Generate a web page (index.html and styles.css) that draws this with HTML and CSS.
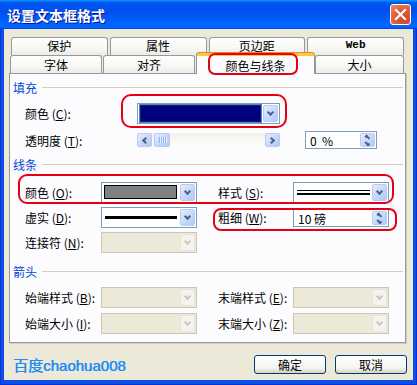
FILE: index.html
```html
<!DOCTYPE html>
<html lang="zh">
<head>
    <meta charset="UTF-8">
    <title>设置文本框格式</title>
    <link rel="stylesheet" href="styles.css">
</head>
<body>
    <div class="window">
        <div class="titlebar">
            <span class="title">设置文本框格式</span>
            <span class="close">
                <svg width="13" height="13" viewBox="0 0 13 13"><path d="M2 2L11 11M11 2L2 11" stroke="#fff" stroke-width="2.2" stroke-linecap="square"/></svg>
            </span>
        </div>
        <div class="client">
            <div class="tabs">
                <div class="tab-row back">
                    <div class="tab">保护</div>
                    <div class="tab">属性</div>
                    <div class="tab">页边距</div>
                    <div class="tab web">Web</div>
                </div>
                <div class="tab-row front">
                    <div class="tab t-font">字体</div>
                    <div class="tab t-align">对齐</div>
                    <div class="tab t-color active">颜色与线条</div>
                    <div class="tab t-size">大小</div>
                </div>
            </div>
            <div class="panel">
                <div class="group-title">填充</div>
                <div class="fill-row">
                    <span class="label">颜色 (<u>C</u>):</span>
                    <div class="combo fill-combo">
                        <div class="value"><span class="swatch navy"></span></div>
                        <span class="drop"></span>
                    </div>
                </div>
                <div class="fill-row second">
                    <span class="label">透明度 (<u>T</u>):</span>
                    <div class="hscroll">
                        <span class="sb-btn left"></span>
                        <span class="sb-thumb"><i></i><i></i><i></i><i></i></span>
                        <span class="sb-track"></span>
                        <span class="sb-btn right"></span>
                    </div>
                    <div class="spin pct"><span class="text">0&nbsp;&nbsp;%</span><span class="spin-btn"></span></div>
                </div>

                <div class="group-title">线条</div>
                <div class="form-grid">
                    <span class="label">颜色 (<u>O</u>):</span>
                    <div class="combo"><div class="value"><span class="swatch gray"></span></div><span class="drop"></span></div>
                    <span class="label right">样式 (<u>S</u>):</span>
                    <div class="combo"><div class="value"><span class="line-double"></span></div><span class="drop"></span></div>

                    <span class="label">虚实 (<u>D</u>):</span>
                    <div class="combo"><div class="value"><span class="line-solid"></span></div><span class="drop"></span></div>
                    <span class="label right">粗细 (<u>W</u>):</span>
                    <div class="spin weight"><span class="text">10 磅</span><span class="spin-btn"></span></div>

                    <span class="label">连接符 (<u>N</u>):</span>
                    <div class="combo disabled"><div class="value"></div><span class="drop"></span></div>
                </div>

                <div class="group-title">箭头</div>
                <div class="form-grid arrows">
                    <span class="label">始端样式 (<u>B</u>):</span>
                    <div class="combo disabled"><div class="value"></div><span class="drop"></span></div>
                    <span class="label right">末端样式 (<u>E</u>):</span>
                    <div class="combo disabled"><div class="value"></div><span class="drop"></span></div>

                    <span class="label">始端大小 (<u>I</u>):</span>
                    <div class="combo disabled"><div class="value"></div><span class="drop"></span></div>
                    <span class="label right">末端大小 (<u>Z</u>):</span>
                    <div class="combo disabled"><div class="value"></div><span class="drop"></span></div>
                </div>
            </div>
            <div class="footer">
                <span class="brand">百度chaohua008</span>
                <button class="btn">确定</button>
                <button class="btn">取消</button>
            </div>
        </div>

        <!-- red hand-drawn marks over the dialog -->
        <div class="mark mark-tab"></div>
        <div class="mark mark-fill"></div>
        <div class="mark mark-line"></div>
        <div class="mark mark-weight"></div>
    </div>
</body>
</html>
```

FILE: styles.css
```css
body {
    margin: 0;
    font-family: "Noto Sans CJK SC", "Noto Sans", sans-serif;
    font-size: 12px;
    color: #000;
    background: #fff;
}
.window {
    position: relative;
    width: 417px;
    height: 385px;
    display: flex;
    flex-direction: column;
    background: #0A4EE2;
    box-shadow: inset 1px 0 0 #0831D9, inset -1px 0 0 #0831D9, inset 0 -1px 0 #0831D9;
}
.titlebar {
    height: 29px;
    flex: none;
    display: flex;
    align-items: center;
    justify-content: space-between;
    padding: 0 6px 0 7px;
    background: linear-gradient(180deg, #0997FF 0, #0053EE 10%, #0050EE 40%, #0066FF 86%, #0066FF 93%, #005BFF 96%, #003DD7 100%);
}
.title {
    color: #fff;
    font-size: 14px;
    font-weight: bold;
    text-shadow: 1px 1px 0 #0F1089;
}
.close {
    width: 19px;
    height: 19px;
    display: flex;
    align-items: center;
    justify-content: center;
    border: 1px solid #fff;
    border-radius: 3px;
    background: radial-gradient(circle at 70% 75%, #CC4627 0, #E0603D 55%, #F08B6E 100%);
    margin-top: -1px;
}
.client {
    flex: 1;
    margin: 0 4px 5px;
    background: #ECE9D8;
}

/* tabs */
.tabs {
    margin-left: 5px;
    width: 397px;
    padding-top: 8px;
}
.tab-row {
    display: flex;
    height: 18px;
}
.back {
    padding: 0 2px;
    gap: 2px;
}
.back .tab {
    flex: 1;
    padding-bottom: 3px;
}
.tab {
    box-sizing: border-box;
    height: 18px;
    display: flex;
    align-items: center;
    justify-content: center;
    border: 1px solid #919B9C;
    border-bottom: none;
    border-radius: 3px 3px 0 0;
    background: linear-gradient(#FFFFFF, #F7F7F4 60%, #ECEBE6);
    font-size: 12px;
}
.tab.web {
    font-family: "Liberation Mono", monospace;
    font-size: 11px;
    font-weight: bold;
}
.t-font { width: 92px; margin-left: 1px; }
.t-align { width: 92px; margin-left: 1px; }
.t-color { width: 119px; margin-left: 1px; }
.t-size { width: 89px; }
.tab.active {
    position: relative;
    z-index: 2;
    height: 21px;
    margin-top: -2px;
    border-top: 3px solid #FFC83C;
    background: #FCFCFE;
    box-shadow: 0 -1px 0 #E68B2C;
    padding-top: 1px;
}

/* panel */
.panel {
    position: relative;
    z-index: 1;
    box-sizing: border-box;
    margin-left: 5px;
    width: 397px;
    height: 270px;
    padding-top: 5px;
    border: 1px solid #919B9C;
    background: #FCFCFE;
    box-shadow: 1px 1px 0 #D0CEBF;
}
.group-title {
    display: flex;
    align-items: center;
    height: 16px;
    padding-left: 3px;
    color: #0046D5;
}
.group-title::after {
    content: "";
    flex: 1;
    border-top: 1px solid #D0D0BF;
    margin: 1px 2px 0 5px;
}
.label {
    display: flex;
    align-items: center;
    white-space: nowrap;
}
.label u {
    text-underline-offset: 1px;
}
.fill-row {
    display: flex;
    align-items: center;
    padding-left: 15px;
    margin-top: 8px;
    margin-bottom: 7px;
}
.fill-row .label {
    width: 112px;
}
.fill-row.second {
    margin-top: 0;
    height: 18px;
}
.form-grid {
    display: grid;
    grid-template-columns: 76px 96px 96px 96px;
    grid-auto-rows: 21px;
    row-gap: 4px;
    padding-left: 15px;
    margin-top: 10px;
    margin-bottom: 10px;
}
.form-grid.arrows {
    margin-top: 8px;
    row-gap: 5px;
}
.label.right {
    padding-left: 21px;
}

/* combo boxes */
.combo {
    box-sizing: border-box;
    display: flex;
    height: 21px;
    padding: 1px;
    border: 1px solid #7F9DB9;
    background: #fff;
}
.fill-combo {
    width: 143px;
}
.combo .value {
    flex: 1;
    display: flex;
    align-items: center;
    min-width: 0;
}
.drop, .spin-btn, .sb-btn, .sb-thumb {
    box-sizing: border-box;
    border: 1px solid #B9CBF3;
    border-radius: 2px;
    background: linear-gradient(135deg, #E5EEFD, #C2D5FB 60%, #B4C9F6);
}
.drop {
    width: 15px;
    flex: none;
    display: flex;
    align-items: center;
    justify-content: center;
}
.drop::after {
    content: "";
    width: 3px;
    height: 3px;
    margin-top: -3px;
    border-right: 2px solid #4D6185;
    border-bottom: 2px solid #4D6185;
    transform: rotate(45deg);
}
.combo.disabled {
    border-color: #C9C7BA;
    background: #ECE9D8;
}
.combo.disabled .drop {
    border-color: #E8E6DC;
    background: #F4F3EE;
}
.combo.disabled .drop::after {
    border-color: #C9C7BA;
}
.swatch {
    box-sizing: border-box;
    display: block;
}
.swatch.navy {
    flex: 1;
    height: 17px;
    margin: 0 2px 0 1px;
    background: #000080;
    border: 1px solid #0A246A;
    box-shadow: 0 0 0 1px #5B83C4;
}
.swatch.gray {
    flex: 1;
    height: 14px;
    margin: 0 3px 2px 1px;
    background: #808080;
    border: 1px solid #000;
}
.line-double {
    flex: 1;
    height: 2px;
    margin: 0 2px 0 2px;
    border-top: 1px solid #000;
    border-bottom: 2px solid #000;
}
.line-solid {
    flex: 1;
    height: 3px;
    margin: 0 3px 0 2px;
    background: #000;
}

/* scrollbar */
.hscroll {
    display: flex;
    width: 143px;
    height: 14px;
    background: linear-gradient(#F3F1EC, #FEFEFB);
}
.sb-btn {
    width: 15px;
    display: flex;
    align-items: center;
    justify-content: center;
}
.sb-btn::after {
    content: "";
    width: 3px;
    height: 3px;
    border-bottom: 2px solid #4D6185;
    transform: rotate(45deg);
}
.sb-btn.left::after {
    border-left: 2px solid #4D6185;
    margin-left: 2px;
}
.sb-btn.right::after {
    border-top: 2px solid #4D6185;
    border-bottom: none;
    border-right: 2px solid #4D6185;
    margin-right: 2px;
}
.sb-thumb {
    width: 16px;
    margin-left: 2px;
    display: flex;
    align-items: center;
    justify-content: center;
    gap: 1px;
}
.sb-thumb i {
    width: 1px;
    height: 6px;
    background: #8CB0F8;
    box-shadow: 1px 0 0 #EEF4FE;
}
.sb-track {
    flex: 1;
}

/* spin boxes */
.spin {
    box-sizing: border-box;
    display: flex;
    height: 18px;
    padding: 1px;
    border: 1px solid #7F9DB9;
    background: #fff;
}
.spin .text {
    flex: 1;
    display: flex;
    align-items: center;
    padding-left: 3px;
}
.pct {
    width: 72px;
    margin-left: 25px;
}
.weight {
    align-self: center;
    margin-top: 1px;
}
.spin-btn {
    width: 15px;
    display: flex;
    flex-direction: column;
    align-items: center;
    justify-content: center;
    gap: 3px;
}
.spin-btn::before, .spin-btn::after {
    content: "";
    width: 3px;
    height: 3px;
    transform: rotate(45deg);
}
.spin-btn::before {
    border-left: 2px solid #4D6185;
    border-top: 2px solid #4D6185;
    margin-top: 2px;
}
.spin-btn::after {
    border-right: 2px solid #4D6185;
    border-bottom: 2px solid #4D6185;
    margin-bottom: 2px;
}

/* footer */
.footer {
    display: flex;
    align-items: center;
    height: 19px;
    margin-top: 12px;
    padding: 0 6px 0 9px;
}
.brand {
    margin-right: auto;
    color: #1E8EF5;
    font-size: 15px;
    font-family: "Liberation Sans", "Noto Sans CJK SC", sans-serif;
    text-shadow: 0.5px 0 0 #1E8EF5;
}
.btn {
    box-sizing: border-box;
    width: 72px;
    height: 19px;
    margin-left: 9px;
    padding: 0;
    border: 1px solid #003C74;
    border-radius: 3px;
    background: linear-gradient(#FFFFFF, #F4F4F0 70%, #D6D0C5);
    font-family: "Noto Sans CJK SC", sans-serif;
    font-size: 12px;
    color: #000;
}

/* red annotation rings */
.mark {
    position: absolute;
    box-sizing: border-box;
    border: 2px solid #E60012;
    z-index: 5;
}
.mark-tab {
    left: 208px;
    top: 53px;
    width: 90px;
    height: 22px;
    border-radius: 7px;
}
.mark-fill {
    left: 121px;
    top: 94px;
    width: 166px;
    height: 34px;
    border-radius: 10px;
}
.mark-line {
    left: 18px;
    top: 174px;
    width: 376px;
    height: 30px;
    border-radius: 9px;
}
.mark-weight {
    left: 213px;
    top: 208px;
    width: 184px;
    height: 23px;
    border-radius: 8px;
}
```
